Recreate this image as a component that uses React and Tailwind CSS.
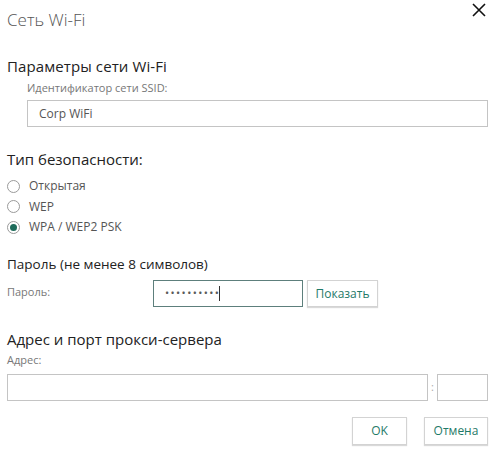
import React from "react";

function Radio({ checked, label }) {
  return (
    <div className="flex h-[20px] items-center">
      <span className="flex h-[13px] w-[13px] items-center justify-center rounded-full border border-[#9a9a9a] bg-white">
        {checked && <span className="h-[7px] w-[7px] rounded-full bg-[#1d6b5a]" />}
      </span>
      <span className="ml-[9px] text-[12px] text-[#555]">{label}</span>
    </div>
  );
}

export default function App() {
  return (
    <div className="relative h-[450px] w-[500px] bg-white font-['Open_Sans',sans-serif] text-[#222]">
      <button className="absolute right-[14px] top-[3px] text-[#111]">
        <svg width="14" height="14" viewBox="0 0 14 14" fill="none" stroke="currentColor" strokeWidth="1.6">
          <path d="M1 1L13 13M13 1L1 13" />
        </svg>
      </button>

      <div className="flex flex-col pl-[7px] pr-[12px]">
        <h1 className="mt-[8px] h-[24px] text-[17px] font-light leading-[24px] text-[#555]">Сеть Wi-Fi</h1>

        <h2 className="mt-[24px] h-[20px] text-[15px] leading-[20px] tracking-[0.1px]">Параметры сети Wi-Fi</h2>
        <div className="ml-[20px] mt-[6px] flex flex-col">
          <label className="h-[12px] text-[11px] leading-[12px] text-[#777]">Идентификатор сети SSID:</label>
          <div className="mt-[6px] flex h-[27px] items-center border border-[#c4c4c4] px-[11px] text-[12px] text-[#555]">
            Corp WiFi
          </div>
        </div>

        <h2 className="mt-[22px] h-[20px] text-[15px] leading-[20px]">Тип безопасности:</h2>
        <div className="mt-[7px] flex flex-col gap-[0.5px]">
          <Radio label="Открытая" />
          <Radio label="WEP" />
          <Radio checked label="WPA / WEP2 PSK" />
        </div>

        <h3 className="mt-[18px] h-[18px] text-[13.5px] leading-[18px]">Пароль (не менее 8 символов)</h3>
        <div className="mt-[7px] flex h-[27px] items-start">
          <span className="mt-[4px] w-[146px] text-[11px] text-[#777]">Пароль:</span>
          <div className="flex h-[27px] w-[150px] items-center border border-[#5d7f7c] pl-[11px] text-[11px] tracking-[1.4px] text-[#5a5a5a]">
            ••••••••••
            <span className="ml-[-1px] h-[15px] w-px bg-[#333]" />
          </div>
          <button className="ml-[4px] h-[27px] w-[71px] border border-[#d3d3d3] bg-white text-[12px] text-[#1f7a68] shadow-[0_1px_1px_rgba(0,0,0,0.15)]">
            Показать
          </button>
        </div>

        <h2 className="mt-[22px] h-[20px] text-[15px] leading-[20px]">Адрес и порт прокси-сервера</h2>
        <label className="mt-[5px] h-[12px] text-[11px] leading-[12px] text-[#777]">Адрес:</label>
        <div className="mt-[8px] flex h-[27px] items-center">
          <div className="h-[27px] w-[421px] border border-[#c4c4c4]" />
          <span className="w-[9px] text-center text-[11px] text-[#aaa]">:</span>
          <div className="h-[27px] w-[51px] border border-[#c4c4c4]" />
        </div>

        <div className="mt-[16px] flex justify-end gap-[17px]">
          <button className="h-[28px] w-[55px] border border-[#d3d3d3] bg-white text-[12px] text-[#1f7a68] shadow-[0_1px_1px_rgba(0,0,0,0.15)]">
            OK
          </button>
          <button className="h-[28px] w-[64px] border border-[#d3d3d3] bg-white text-[12px] text-[#1f7a68] shadow-[0_1px_1px_rgba(0,0,0,0.15)]">
            Отмена
          </button>
        </div>
      </div>
    </div>
  );
}
